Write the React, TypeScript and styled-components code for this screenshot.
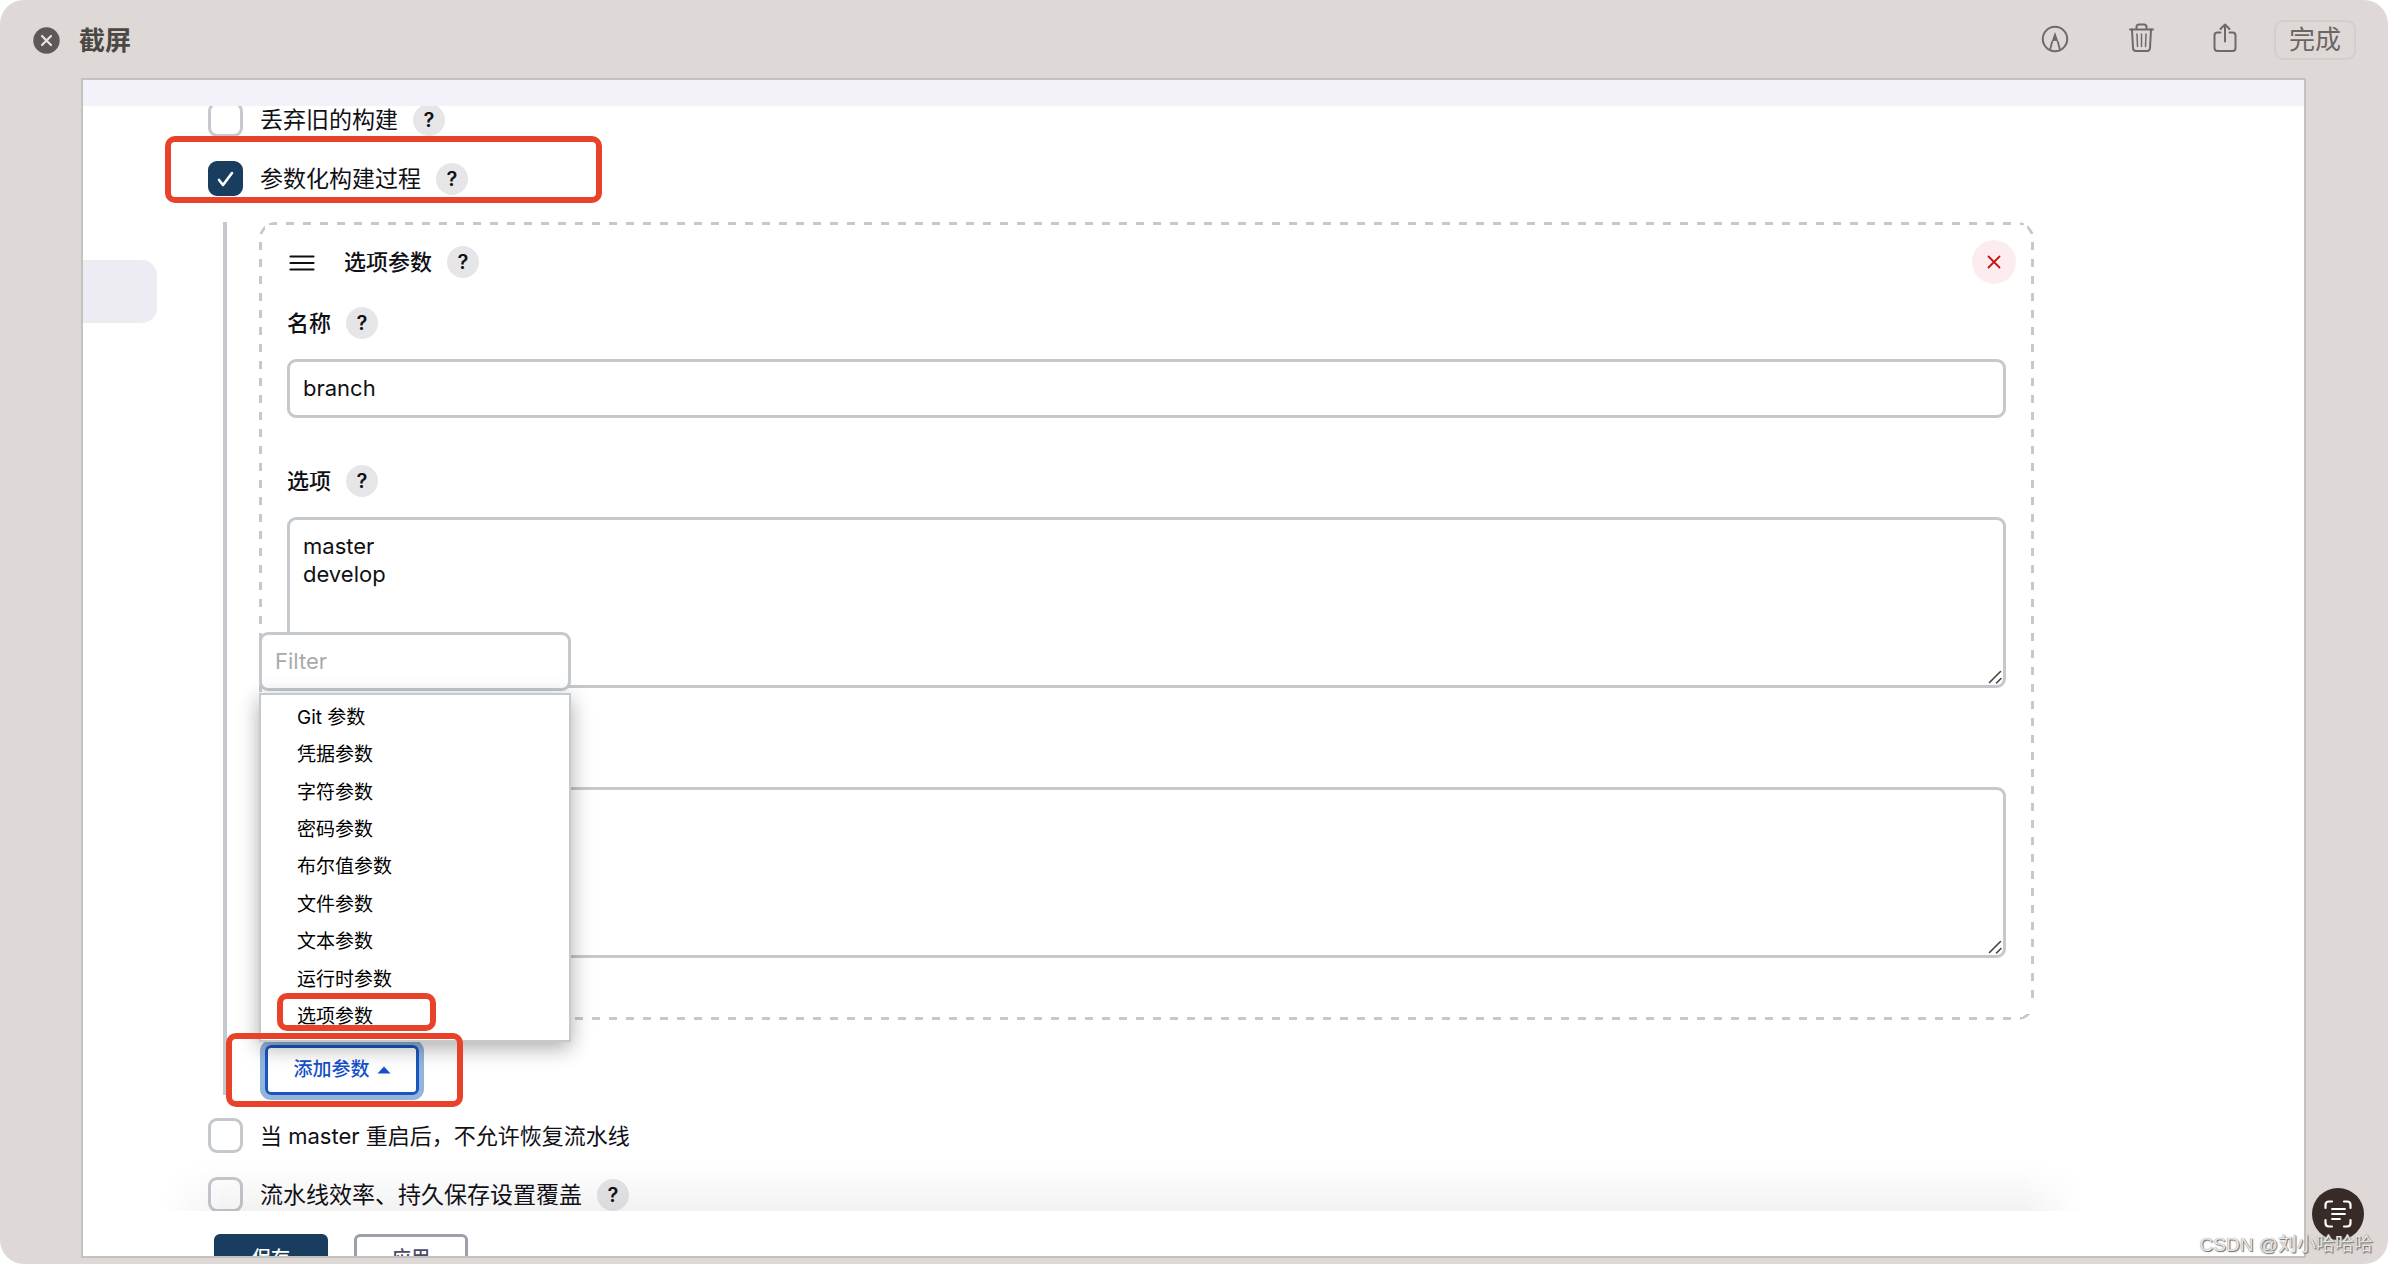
import React, { useState } from 'react';
import styled, { createGlobalStyle, css } from 'styled-components';

const line = '#c3c9cd';
const ink = '#101015';
const red = '#e8422a';
const navy = '#193d5e';

const Global = createGlobalStyle`
  *, *::before, *::after { box-sizing: border-box; }
  body { margin: 0; background: #fff; }
  body, button, input, textarea {
    font-family: Inter, "Noto Sans CJK SC", sans-serif;
    color: ${ink};
  }
  button { padding: 0; border: 0; background: none; cursor: pointer; }
`;

const Window = styled.div`
  display: flex;
  flex-direction: column;
  height: 100vh;
  padding: 0 82px 6px 81px;
  border-radius: 24px;
  background: #ded9d6;
  position: relative;
  overflow: hidden;
`;

const TitleBar = styled.header`
  display: flex;
  flex: none;
  align-items: center;
  height: 78px;
  margin: 0 -50px 0 -48px;
  padding-top: 2px;
  color: #6f6a67;
`;

const Title = styled.h1`
  flex: 1;
  margin: 0 0 0 19px;
  padding-top: 2px;
  font-size: 26px;
  line-height: 40px;
  font-weight: 700;
  color: #4b4745;
`;

const Tools = styled.div`
  display: flex;
  align-items: center;
  gap: 54px;
  margin-right: 36px;
  padding-bottom: 2px;
`;

const IconButton = styled.button`
  display: flex;
  color: inherit;
`;

const DoneButton = styled.button`
  width: 82px;
  height: 40px;
  border: 2px solid #d3cecb;
  border-radius: 9px;
  font-size: 26px;
  line-height: 36px;
  color: #6b6663;
`;

const Frame = styled.main`
  display: flex;
  flex-direction: column;
  flex: 1;
  min-height: 0;
  border: 2px solid #c5c1bf;
  background: #fff;
  overflow: hidden;
`;

const Crumbs = styled.div`
  flex: none;
  height: 26px;
  background: #f3f2f8;
`;

const Body = styled.div`
  display: flex;
  flex: 1;
  min-height: 0;
  overflow: hidden;
  position: relative;
  &::after {
    content: '';
    position: absolute;
    left: 80px;
    right: 222px;
    bottom: 0;
    height: 48px;
    pointer-events: none;
    background: linear-gradient(to top, rgba(20, 20, 40, 0.055), rgba(20, 20, 40, 0));
    mask-image: linear-gradient(to right, transparent, #000 60px, #000 calc(100% - 60px), transparent);
  }
`;

const Side = styled.nav`
  flex: none;
  width: 74px;
  height: 63px;
  margin-top: 154px;
  border-radius: 0 15px 15px 0;
  background: #edecf2;
`;

const Form = styled.form`
  flex: 1;
  min-width: 0;
  margin: -16px 270px 0 51px;
`;

const Row = styled.div`
  display: flex;
  align-items: center;
  height: 59px;
  position: relative;
`;

const Check = styled.input`
  appearance: none;
  flex: none;
  width: 35px;
  height: 35px;
  margin: 0 17px 0 0;
  border: 3px solid ${line};
  border-radius: 9px;
  background: #fff;
  &:checked {
    border-color: ${navy};
    background: ${navy} url("data:image/svg+xml,%3Csvg xmlns='http://www.w3.org/2000/svg' viewBox='0 0 29 29' fill='none' stroke='white' stroke-width='2.6' stroke-linecap='round' stroke-linejoin='round'%3E%3Cpath d='M8 16l4 5 9-12'/%3E%3C/svg%3E") center / 29px no-repeat;
  }
`;

const Label = styled.label<{ $size?: number; $strong?: boolean }>`
  font-size: ${(p) => p.$size ?? 22}px;
  line-height: 32px;
  font-weight: ${(p) => (p.$strong ? 500 : 400)};
`;

const Help = styled.button`
  flex: none;
  width: 32px;
  height: 32px;
  margin-left: 15px;
  border-radius: 50%;
  background: #e6e6e9;
  font-size: 20px;
  line-height: 32px;
  font-weight: 600;
`;

const Mark = styled.span<{ $box: [number, number, number, number] }>`
  position: absolute;
  z-index: 5;
  left: ${(p) => p.$box[0]}px;
  top: ${(p) => p.$box[1]}px;
  width: ${(p) => p.$box[2]}px;
  height: ${(p) => p.$box[3]}px;
  border: 6px solid ${red};
  border-radius: 10px;
  pointer-events: none;
`;

const Section = styled.section`
  margin: 14px 0 11px 15px;
  padding-left: 32px;
  border-left: 4px solid ${line};
`;

const dash = '#000 0 8px, transparent 8px 17px';
const solid = 'linear-gradient(#000, #000)';

const Card = styled.div`
  position: relative;
  padding: 18px 28px 62px;
  &::before {
    content: '';
    position: absolute;
    inset: 0;
    border: 3px solid ${line};
    border-radius: 16px;
    pointer-events: none;
    mask:
      repeating-linear-gradient(to right, ${dash}) 10px 0 / calc(100% - 20px) 3px no-repeat,
      repeating-linear-gradient(to right, ${dash}) 10px 100% / calc(100% - 20px) 3px no-repeat,
      repeating-linear-gradient(to bottom, ${dash}) 0 20px / 3px calc(100% - 36px) no-repeat,
      repeating-linear-gradient(to bottom, ${dash}) 100% 20px / 3px calc(100% - 36px) no-repeat,
      ${solid} 0 4px / 6px 8px no-repeat,
      ${solid} calc(100% - 1px) 4px / 6px 8px no-repeat,
      ${solid} 4px 100% / 7px 6px no-repeat,
      ${solid} calc(100% - 4px) 100% / 7px 6px no-repeat;
  }
`;

const CardHead = styled.div`
  display: flex;
  align-items: center;
  height: 44px;
  margin-right: -10px;
`;

const Grip = styled.button`
  display: flex;
  width: 57px;
  padding-left: 2px;
`;

const Delete = styled.button`
  display: grid;
  place-items: center;
  width: 44px;
  height: 44px;
  margin-left: auto;
  border-radius: 50%;
  background: #fcecee;
`;

const Field = styled.div<{ $first?: boolean }>`
  margin-top: ${(p) => (p.$first ? 23 : 47)}px;
`;

const FieldHead = styled.div`
  display: flex;
  align-items: center;
  height: 32px;
  margin-bottom: 20px;
`;

const box = css`
  display: block;
  width: 100%;
  border: 3px solid ${line};
  border-radius: 9px;
  background: #fff;
  font-size: 22px;
  line-height: 28px;
  outline: 0;
`;

const TextInput = styled.input`
  ${box}
  height: 59px;
  padding: 0 13px 2px;
  &::placeholder { color: #a9a9ad; }
`;

const TextArea = styled.textarea`
  ${box}
  height: 171px;
  padding: 12px 13px;
  resize: none;
`;

const AreaWrap = styled.div`
  position: relative;
  svg {
    position: absolute;
    right: 4px;
    bottom: 4px;
  }
`;

const AddWrap = styled.div`
  position: relative;
  width: max-content;
  margin-top: 25px;
  padding-left: 6px;
`;

const AddButton = styled.button`
  display: flex;
  align-items: center;
  justify-content: center;
  gap: 7px;
  width: 154px;
  height: 50px;
  border: 3px solid #1a56c0;
  border-radius: 6px;
  box-shadow: 0 0 0 5px #93b5da;
  font-size: 19px;
  line-height: 28px;
  font-weight: 500;
  color: #1450c8;
`;

const Popup = styled.div`
  position: absolute;
  z-index: 3;
  left: 0;
  bottom: 53px;
  width: 312px;
`;

const Menu = styled.ul`
  display: grid;
  grid-auto-rows: 1fr;
  height: 349px;
  margin: 2px 0 0;
  padding: 4px 0;
  border: 2px solid ${line};
  background: #fff;
  box-shadow: 0 6px 20px rgba(0, 0, 0, 0.33);
  list-style: none;
`;

const MenuItem = styled.li`
  display: flex;
  position: relative;
  button {
    flex: 1;
    padding-left: 36px;
    font-size: 19px;
    line-height: 28px;
    text-align: left;
    color: #000;
  }
`;

const Footer = styled.footer`
  display: flex;
  flex: none;
  gap: 26px;
  height: 45px;
  padding: 23px 0 0 131px;
  overflow: hidden;
`;

const FootButton = styled.button<{ $primary?: boolean }>`
  width: 114px;
  height: 50px;
  border: 3px solid ${(p) => (p.$primary ? navy : '#9ba0a9')};
  border-radius: 6px;
  background: ${(p) => (p.$primary ? navy : '#fff')};
  color: ${(p) => (p.$primary ? '#fff' : '#4d4a68')};
  font-size: 19px;
  line-height: 28px;
  font-weight: 500;
`;

const ScanButton = styled.button`
  position: absolute;
  right: 24px;
  bottom: 24px;
  display: grid;
  place-items: center;
  width: 52px;
  height: 52px;
  border-radius: 50%;
  background: #372a27;
`;

const Watermark = styled.span`
  position: absolute;
  right: 15px;
  bottom: 5px;
  font-family: "Liberation Sans", "Noto Sans CJK SC", sans-serif;
  font-size: 19px;
  line-height: 28px;
  color: #e9e7e6;
  text-shadow: 1px 1px 1px #666, 0 0 1px #888;
`;

const Caret = () => (
  <svg width="14" height="8" viewBox="0 0 14 8" aria-hidden="true">
    <path d="M7 0.5L13.5 7.5H0.5z" fill="#1450c8" />
  </svg>
);

const ResizeMark = () => (
  <svg width="14" height="14" viewBox="0 0 14 14" stroke="#444" strokeWidth="1.6" strokeLinecap="round" aria-hidden="true">
    <path d="M1.500 12.500L12.500 1.500M8.500 13L13 8.500" />
  </svg>
);

const PARAMS = ['Git 参数', '凭据参数', '字符参数', '密码参数', '布尔值参数', '文件参数', '文本参数', '运行时参数', '选项参数'];

function HelpMark() {
  return <Help type="button">?</Help>;
}

interface OptionProps {
  id: string;
  text: string;
  size?: number;
  help?: boolean;
  on?: boolean;
  children?: React.ReactNode;
}

function Option({ id, text, size = 23, help, on, children }: OptionProps) {
  return (
    <Row>
      <Check type="checkbox" id={id} defaultChecked={on} />
      <Label htmlFor={id} $size={size}>{text}</Label>
      {help && <HelpMark />}
      {children}
    </Row>
  );
}

export default function App() {
  const [name, setName] = useState('branch');
  const [choices, setChoices] = useState('master\ndevelop');
  return (
    <>
      <Global />
      <Window>
        <TitleBar>
          <IconButton type="button">
            <svg width="27" height="27" viewBox="0 0 27 27" aria-hidden="true">
              <circle cx="13.5" cy="13.5" r="13.2" fill="#5e5956" />
              <path d="M9 9l9 9M18 9l-9 9" stroke="#e8e4e1" strokeWidth="2.2" strokeLinecap="round" />
            </svg>
          </IconButton>
          <Title>截屏</Title>
          <Tools>
            <IconButton type="button">
              <svg width="30" height="32" viewBox="0 0 30 32" fill="none" stroke="currentColor" strokeWidth="2" aria-hidden="true">
                <circle cx="15" cy="16" r="12.200" />
                <path d="M10 27L12.200 18.500M20 27L17.800 18.500" strokeWidth="1.800" />
                <path d="M15 9L18.800 20Q16.800 17.800 15 17.800T11.200 20z" fill="currentColor" stroke="none" />
              </svg>
            </IconButton>
            <IconButton type="button">
              <svg width="34" height="32" viewBox="0 0 34 32" fill="none" stroke="currentColor" strokeWidth="2" strokeLinecap="round" strokeLinejoin="round" aria-hidden="true">
                <path d="M6 6.500H29M12.500 6.500V4Q12.500 1.500 15 1.500H20Q22.500 1.500 22.500 4V6.500" />
                <path d="M8 6.500L9 25Q9.200 28 12 28H23Q25.800 28 26 25L27 6.500" />
                <path d="M13 11L13.500 23.500M17.500 11V23.500M22 11L21.500 23.500" strokeWidth="1.500" />
              </svg>
            </IconButton>
            <IconButton type="button">
              <svg width="26" height="32" viewBox="0 0 26 32" fill="none" stroke="currentColor" strokeWidth="2" strokeLinecap="round" strokeLinejoin="round" aria-hidden="true">
                <path d="M8.500 9.500H5.500Q2.500 9.500 2.500 12.500V25Q2.500 28 5.500 28H20.500Q23.500 28 23.500 25V12.500Q23.500 9.500 20.500 9.500H17.500" />
                <path d="M13 18.500V1.500M8.500 6L13 1.500L17.500 6" />
              </svg>
            </IconButton>
          </Tools>
          <DoneButton type="button">完成</DoneButton>
        </TitleBar>

        <Frame>
          <Crumbs />
          <Body>
            <Side />
            <Form onSubmit={(e) => e.preventDefault()}>
              <Option id="discard" text="丢弃旧的构建" help />
              <Option id="param" text="参数化构建过程" help on>
                <Mark $box={[-43, -13, 437, 67]} />
              </Option>

              <Section>
                <Card>
                  <CardHead>
                    <Grip type="button">
                      <svg width="26" height="17" viewBox="0 0 26 17" stroke={ink} strokeWidth="2.200" strokeLinecap="round" aria-hidden="true">
                        <path d="M1.500 2.500H24.500M1.500 9H24.500M1.500 15.500H24.500" />
                      </svg>
                    </Grip>
                    <Label as="span" $strong>选项参数</Label>
                    <HelpMark />
                    <Delete type="button">
                      <svg width="14" height="14" viewBox="0 0 14 14" stroke="#c4151c" strokeWidth="1.800" strokeLinecap="round" aria-hidden="true">
                        <path d="M1.500 1.500L12.500 12.500M12.500 1.500L1.500 12.500" />
                      </svg>
                    </Delete>
                  </CardHead>

                  <Field $first>
                    <FieldHead>
                      <Label htmlFor="name" $strong>名称</Label>
                      <HelpMark />
                    </FieldHead>
                    <TextInput id="name" value={name} onChange={(e) => setName(e.target.value)} />
                  </Field>

                  <Field>
                    <FieldHead>
                      <Label htmlFor="choices" $strong>选项</Label>
                      <HelpMark />
                    </FieldHead>
                    <AreaWrap>
                      <TextArea id="choices" value={choices} onChange={(e) => setChoices(e.target.value)} />
                      <ResizeMark />
                    </AreaWrap>
                  </Field>

                  <Field>
                    <FieldHead />
                    <AreaWrap>
                      <TextArea aria-label="描述" />
                      <ResizeMark />
                    </AreaWrap>
                  </Field>
                </Card>

                <AddWrap>
                  <AddButton type="button">添加参数 <Caret /></AddButton>
                  <Popup>
                    <TextInput placeholder="Filter" aria-label="Filter" />
                    <Menu>
                      {PARAMS.map((p, i) => (
                        <MenuItem key={p}>
                          <button type="button">{p}</button>
                          {i === PARAMS.length - 1 && <Mark $box={[16, -6, 159, 38]} />}
                        </MenuItem>
                      ))}
                    </Menu>
                  </Popup>
                  <Mark $box={[-33, -12, 237, 74]} />
                </AddWrap>
              </Section>

              <Option id="resume" text="当 master 重启后，不允许恢复流水线" size={22} />
              <Option id="durability" text="流水线效率、持久保存设置覆盖" help />
            </Form>
          </Body>
          <Footer>
            <FootButton type="button" $primary>保存</FootButton>
            <FootButton type="button">应用</FootButton>
          </Footer>
        </Frame>

        <ScanButton type="button">
          <svg width="28" height="28" viewBox="0 0 28 28" fill="none" stroke="#fff" strokeWidth="2.200" strokeLinecap="round" aria-hidden="true">
            <path d="M1.500 8V5Q1.500 1.500 5 1.500H8M20 1.500H23Q26.500 1.500 26.500 5V8M26.500 20V23Q26.500 26.500 23 26.500H20M8 26.500H5Q1.500 26.500 1.500 23V20" />
            <path d="M8 9H21M8 14H21M8 19H16" strokeWidth="1.800" />
          </svg>
        </ScanButton>
        <Watermark>CSDN @刘小哈哈哈</Watermark>
      </Window>
    </>
  );
}
